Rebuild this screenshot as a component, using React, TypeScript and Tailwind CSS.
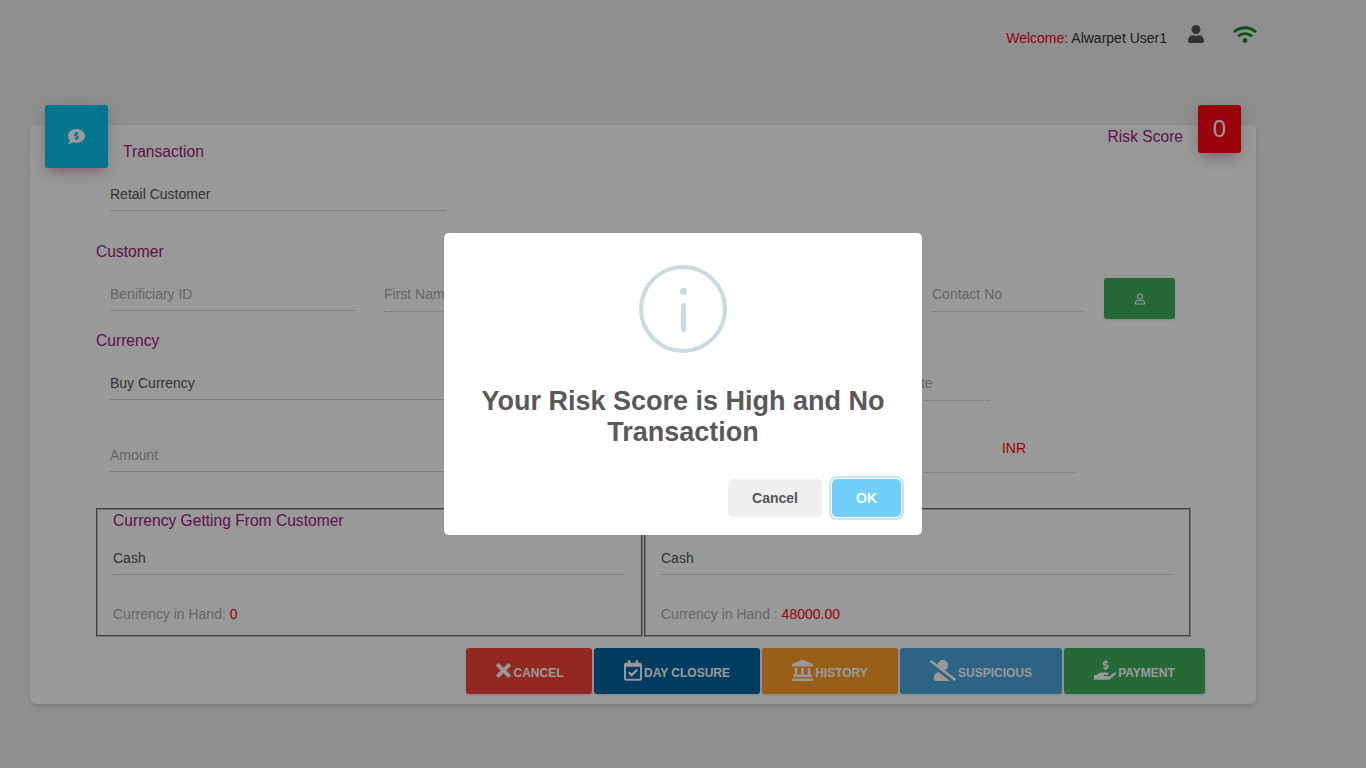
import { FaTimes, FaRegCalendarCheck, FaLandmark, FaUserSlash, FaHandHoldingUsd, FaUser, FaWifi, FaCommentDollar } from "react-icons/fa";

function Field({ label, width, value, dotted }: any) {
  return (
    <div className={`${width} flex items-center border-b ${dotted ? "h-[34px] pb-[1px] border-dotted border-[#bdbdbd]" : "h-[33px] border-[#d2d2d2]"}`}>
      <span className={`text-sm ${value ? "text-[#555]" : "text-[#aaa]"}`}>{label}</span>
    </div>
  );
}

function ActionButton({ icon, label, width, color }: any) {
  return (
    <button className={`${width} ${color} h-[46px] rounded-[3px] flex items-center justify-center gap-[2px] text-xs font-bold text-white shadow-sm`}>
      {icon}
      <span className="mt-[4px]">{label}</span>
    </button>
  );
}

export default function App() {
  return (
    <div className="relative min-h-[768px] bg-[#eeeeee] px-[30px] font-['Liberation_Sans',Arial,sans-serif] overflow-hidden">
      <header className="h-[125px] pt-[22px] flex justify-end items-start pr-[79px]">
        <div className="text-sm mt-[6px] text-[#ff0014]">
          Welcome: <span className="text-[#333]">Alwarpet User1</span>
        </div>
        <FaUser className="w-[16px] h-[18px] text-[#555] ml-[21px] mt-[3px]" />
        <FaWifi className="w-[24px] h-[19px] text-[#0c8a1c] ml-[29px] mt-[3px]" />
      </header>

      <main className="relative w-[1226px] h-[579px] bg-white rounded-md shadow-md pt-[17px] pl-[66px]">
        <div className="absolute left-[15px] top-[-20px] w-[63px] h-[63px] rounded-[3px] bg-[#07c4ee] flex items-center justify-center shadow-[0_4px_20px_0_rgba(0,0,0,0.14),0_7px_10px_-5px_rgba(233,30,99,0.4)]">
          <FaCommentDollar className="w-[19px] h-[17px] text-white" />
        </div>
        <div className="absolute right-[73px] top-[0px] text-[15.6px] text-[#a01a80]">Risk Score</div>
        <div className="absolute left-[1168px] top-[-20px] w-[43px] h-[48px] rounded-[3px] bg-[#ff0014] flex items-center justify-center text-2xl text-white shadow-[0_4px_20px_0_rgba(0,0,0,0.14),0_7px_10px_-5px_rgba(233,30,99,0.4)]">
          0
        </div>

        <h2 className="pl-[27px] h-[20px] text-[15.6px] leading-5 text-[#a01a80]">Transaction</h2>
        <div className="pl-[14px] mt-[16px]">
          <Field label="Retail Customer" value width="w-[336px]" />
        </div>

        <h2 className="mt-[31px] text-[15.6px] leading-5 text-[#a01a80]">Customer</h2>
        <div className="mt-[16px] pl-[14px] flex items-start h-[33px]">
          <Field label="Benificiary ID" width="w-[245px]" />
          <div className="ml-[29px]"><Field label="First Name" dotted width="w-[150px]" /></div>
          <div className="ml-[398px]"><Field label="Contact No" dotted width="w-[152px]" /></div>
          <button className="ml-[20px] w-[71px] h-[41px] rounded-[3px] bg-[#3fb05d] flex items-center justify-center shadow-sm shrink-0">
            <svg viewBox="0 0 24 24" className="w-[12px] h-[12px]" fill="none" stroke="white" strokeWidth="2.2">
              <circle cx="12" cy="7" r="5" />
              <path d="M3 22v-2a5 5 0 0 1 5-5h8a5 5 0 0 1 5 5v2z" />
            </svg>
          </button>
        </div>

        <h2 className="mt-[20px] text-[15.6px] leading-5 text-[#a01a80]">Currency</h2>
        <div className="mt-[16px] pl-[14px] flex items-start h-[33px]">
          <Field label="Buy Currency" value width="w-[336px]" />
          <div className="ml-[457px]"><Field label="Rate" dotted width="w-[87px]" /></div>
        </div>

        <div className="mt-[39px] pl-[14px] flex items-start h-[33px]">
          <Field label="Amount" width="w-[336px]" />
          <div className="ml-[254px] w-[376px] h-[34px] pt-[2px] pr-[50px] flex justify-end border-b border-dotted border-[#bdbdbd] text-sm leading-[14px] text-[#ff0014]">
            INR
          </div>
        </div>

        <div className="mt-[36px] flex">
          <section className="w-[547px] h-[129px] border-2 [border-style:groove] border-[#c0c0c0] px-[15px]">
            <h3 className="text-[15.6px] leading-5 text-[#a01a80] mt-[1px]">Currency Getting From Customer</h3>
            <div className="h-[33px] mt-[11px] flex items-center border-b border-[#d2d2d2] text-sm text-[#555] w-[512px]">Cash</div>
            <p className="text-sm mt-[29px] text-[#aaa]">Currency in Hand: <span className="text-[#ff0014]">0</span></p>
          </section>
          <section className="w-[547px] h-[129px] border-2 [border-style:groove] border-[#c0c0c0] px-[15px] ml-[1px]">
            <h3 className="text-[15.6px] leading-5 text-[#a01a80] mt-[1px]">Currency</h3>
            <div className="h-[33px] mt-[11px] flex items-center border-b border-[#d2d2d2] text-sm text-[#555] w-[512px]">Cash</div>
            <p className="text-sm mt-[29px] text-[#aaa]">Currency in Hand : <span className="text-[#ff0014]">48000.00</span></p>
          </section>
        </div>

        <div className="mt-[11px] ml-[370px] flex gap-[2px]">
          <ActionButton width="w-[126px]" color="bg-[#f44336]" label="CANCEL" icon={<FaTimes className="w-[17px] h-[21px] mb-[2px]" />} />
          <ActionButton width="w-[166px]" color="bg-[#00659f]" label="DAY CLOSURE" icon={<FaRegCalendarCheck className="w-[18px] h-[21px] mb-[2px]" />} />
          <ActionButton width="w-[136px]" color="bg-[#ff9f2b]" label="HISTORY" icon={<FaLandmark className="w-[21px] h-[21px] mb-[2px]" />} />
          <ActionButton width="w-[162px]" color="bg-[#4ba7e0]" label="SUSPICIOUS" icon={<FaUserSlash className="w-[26px] h-[21px] mb-[2px]" />} />
          <ActionButton width="w-[141px]" color="bg-[#3fb05d]" label="PAYMENT" icon={<FaHandHoldingUsd className="w-[22px] h-[20px] mb-[2px]" />} />
        </div>
      </main>

      <div className="fixed inset-0 bg-black/40 flex items-center justify-center">
        <div className="w-[478px] h-[302px] bg-white rounded-[5px] flex flex-col items-center pt-[32px]">
          <div className="w-[88px] h-[88px] rounded-full border-[4px] border-[#c9dae1] flex flex-col items-center pt-[19px]">
            <span className="w-[7px] h-[7px] rounded-full bg-[#c9dae1]" />
            <span className="w-[5px] h-[29px] rounded-sm bg-[#c9dae1] mt-[8px]" />
          </div>
          <h1 className="mt-[33px] w-[430px] text-center text-[27px] leading-[31px] font-bold text-[#595959]">
            Your Risk Score is High and No Transaction
          </h1>
          <div className="mt-[31px] w-full flex justify-end pr-[21px] gap-[10px]">
            <button className="w-[94px] h-[38px] rounded-[5px] bg-[#efefef] text-sm font-bold text-[#555]">Cancel</button>
            <button className="w-[69px] h-[38px] rounded-[5px] bg-[#71d0f9] text-sm font-bold text-white shadow-[0_0_0_1px_#ffffff,0_0_0_3px_#c6e4f3]">OK</button>
          </div>
        </div>
      </div>
    </div>
  );
}
